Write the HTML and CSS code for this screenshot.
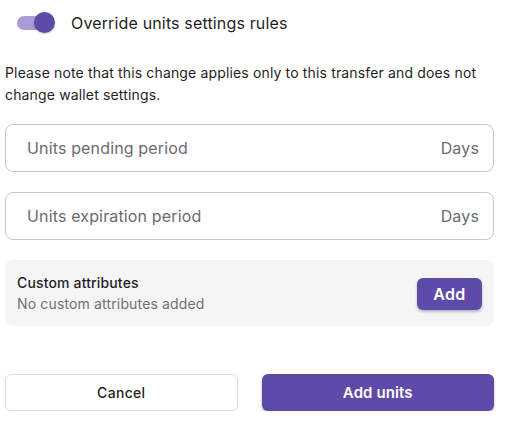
FILE: index.html
```html
<!DOCTYPE html>
<html>
<head>
<meta charset="utf-8">
<link rel="stylesheet" href="styles.css">
</head>
<body>
<div class="page">
  <div class="toggle-row">
    <span class="switch"><span class="track"></span><span class="thumb"></span></span>
    <span class="toggle-label">Override units settings rules</span>
  </div>
  <p class="note">Please note that this change applies only to this transfer and does not change wallet settings.</p>
  <div class="field"><span class="placeholder">Units pending period</span><span class="suffix">Days</span></div>
  <div class="field field-second"><span class="placeholder">Units expiration period</span><span class="suffix">Days</span></div>
  <div class="attrs">
    <div class="attrs-text">
      <div class="attrs-title">Custom attributes</div>
      <div class="attrs-sub">No custom attributes added</div>
    </div>
    <button class="btn-add">Add</button>
  </div>
  <div class="actions">
    <button class="btn btn-cancel">Cancel</button>
    <button class="btn btn-primary">Add units</button>
  </div>
</div>
</body>
</html>
```
FILE: styles.css
```css
* { box-sizing: border-box; }
html, body { margin: 0; padding: 0; background: #fff; }
body { font-family: Inter, "Noto Sans", sans-serif; color: #1f1f23; letter-spacing: 0.15px; }
.page { width: 489px; margin-left: 5px; padding-top: 12px; }
.toggle-row { display: flex; align-items: center; height: 22px; }
.switch { position: relative; width: 38px; height: 22px; margin-left: 12px; flex: none; }
.track { position: absolute; left: 0; top: 4px; width: 34px; height: 14px; border-radius: 7px; background: #a89cd2; }
.thumb { position: absolute; left: 17px; top: 0; width: 21px; height: 21px; border-radius: 50%; background: #5e4aa8; box-shadow: 0 1px 2px rgba(0,0,0,0.2); }
.toggle-label { margin-left: 16px; font-size: 16px; color: #1f1f23; }
.note { margin: 28px 0 0; font-size: 14px; line-height: 22px; color: #1f1f23; }
.field { margin-top: 18px; height: 48px; border: 1px solid #c8c8cc; border-radius: 8px; display: flex; align-items: center; justify-content: space-between; padding: 0 14px 0 21px; font-size: 16px; color: #6b6b70; }
.field-second { margin-top: 20px; }
.attrs { margin-top: 20px; height: 66px; background: #f5f5f6; border-radius: 8px; display: flex; align-items: center; justify-content: space-between; padding: 0 12px 0 12px; }
.attrs-title { font-size: 14px; font-weight: 500; color: #1f1f23; line-height: 20px; }
.attrs-sub { font-size: 14px; color: #707075; line-height: 20px; margin-top: 1px; }
.btn-add { width: 65px; height: 32px; border: none; border-radius: 6px; background: #5e4aa8; color: #fff; font-family: inherit; font-size: 16px; font-weight: 600; letter-spacing: 0.3px; box-shadow: 0 2px 3px rgba(0,0,0,0.25); margin-top: 1px; }
.actions { margin-top: 48px; display: grid; grid-template-columns: 1fr 1fr; gap: 24px; }
.btn { height: 37px; border-radius: 6px; font-family: inherit; font-size: 14px; font-weight: 500; letter-spacing: 0.3px; }
.btn-cancel { background: #fff; border: 1px solid #dcdce0; color: #1f1f23; }
.btn-primary { background: #5e4aa8; border: none; color: #fff; font-size: 15px; font-weight: 600; letter-spacing: 0.1px; box-shadow: 0 2px 3px rgba(0,0,0,0.25); }
```
